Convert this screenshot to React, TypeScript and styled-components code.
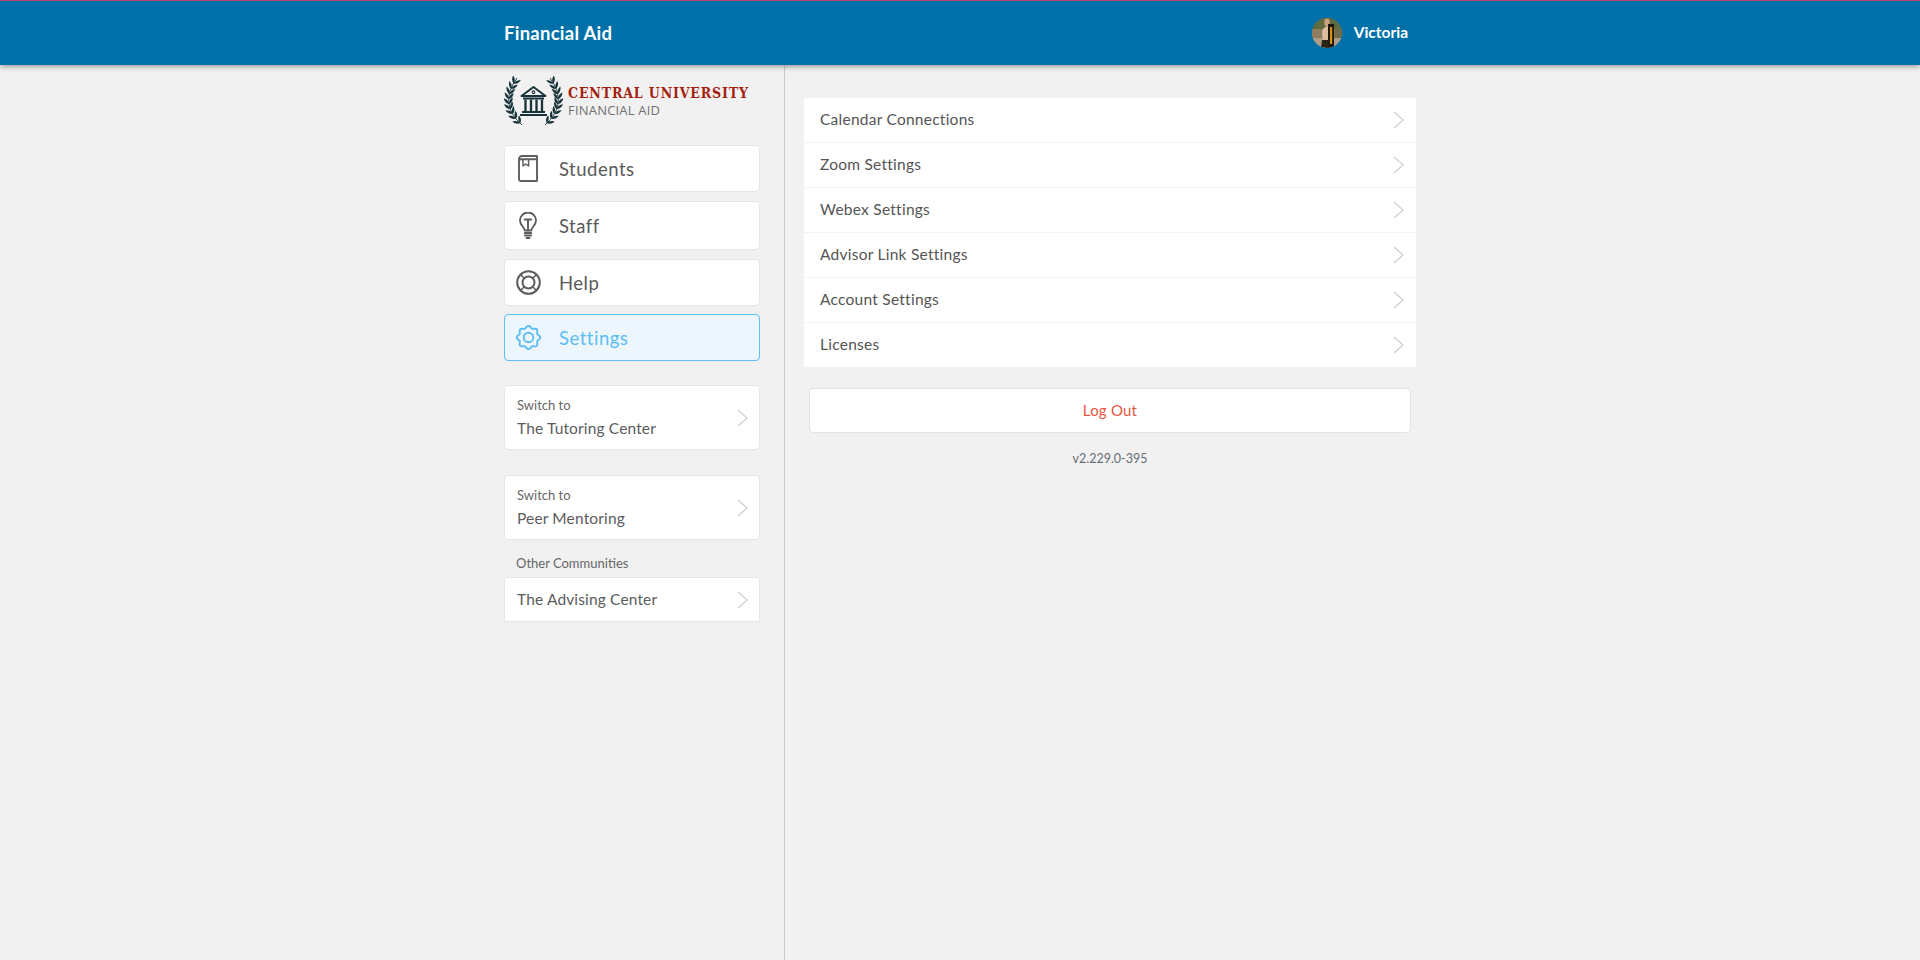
import React from "react";
import styled, { createGlobalStyle } from "styled-components";

const Global = createGlobalStyle`
  html, body { margin: 0; padding: 0; background: #f1f1f1; }
  body { font-family: Lato, "Open Sans", "Liberation Sans", sans-serif; color: #555; }
  * { box-sizing: border-box; }
`;

const Page = styled.div`
  height: 960px;
  display: flex;
  flex-direction: column;
  overflow: hidden;
`;
const TopBar = styled.header`
  height: 65px;
  flex: none;
  background: #0071a8;
  border-top: 1px solid #c2406f;
  box-shadow: 0 1px 6px rgba(0, 0, 0, 0.45);
  position: relative;
  z-index: 2;
`;
const TopInner = styled.div`
  width: 912px;
  height: 100%;
  margin: 0 auto;
  padding-right: 8px;
  display: flex;
  align-items: center;
  justify-content: space-between;
  color: #fff;
`;
const Title = styled.div`
  font-size: 18.5px;
  font-weight: 700;
  letter-spacing: 0.25px;
  padding-bottom: 1px;
`;
const User = styled.div`
  display: flex;
  align-items: center;
  gap: 12px;
  font-size: 15.5px;
  font-weight: 700;
`;
const UserName = styled.span`
  display: block;
  padding-bottom: 2px;
`;
const Columns = styled.div`
  flex: 1;
  width: 912px;
  margin: 0 auto;
  display: flex;
  min-height: 0;
`;
const Sidebar = styled.aside`
  width: 281px;
  flex: none;
  padding-right: 24px;
  border-right: 1px solid #c8c8c8;
  display: flex;
  flex-direction: column;
`;
const Logo = styled.div`
  height: 50px;
  margin-top: 11px;
  display: flex;
  align-items: center;
  gap: 5px;
`;
const LogoText = styled.div`
  display: flex;
  flex-direction: column;
`;
const LogoTop = styled.div`
  font-family: "DejaVu Serif", serif;
  font-stretch: condensed;
  font-weight: 700;
  font-size: 14px;
  line-height: 18px;
  letter-spacing: 0.85px;
  color: #a51f10;
  white-space: nowrap;
`;
const LogoSub = styled.div`
  font-family: "Open Sans", sans-serif;
  font-size: 13px;
  line-height: 16px;
  letter-spacing: 0.2px;
  color: #707070;
  white-space: nowrap;
`;
const NavList = styled.nav`
  margin-top: 19px;
  display: flex;
  flex-direction: column;
`;
const NavItem = styled.div<{ $active?: boolean; $h: number; $mb: number }>`
  height: ${(p) => p.$h}px;
  margin-bottom: ${(p) => p.$mb}px;
  display: flex;
  align-items: center;
  background: ${(p) => (p.$active ? "#edf6fd" : "#fff")};
  border: 1px solid ${(p) => (p.$active ? "#5cc0f9" : "#e6e6e6")};
  border-radius: 4px;
  color: ${(p) => (p.$active ? "#5bbdf6" : "#5a5a5a")};
  font-size: 18.5px;
  font-weight: 400;
  letter-spacing: 0.5px;
`;
const NavIcon = styled.span`
  width: 54px;
  flex: none;
  padding-right: 8px;
  display: flex;
  align-items: center;
  justify-content: center;
`;
const SwitchCard = styled.div<{ $h: number; $mb: number; $square?: boolean }>`
  height: ${(p) => p.$h}px;
  margin-bottom: ${(p) => p.$mb}px;
  padding: 0 11px 0 12px;
  display: flex;
  align-items: center;
  justify-content: space-between;
  background: #fff;
  border: 1px solid #e6e6e6;
  border-radius: ${(p) => (p.$square ? 1 : 4)}px;
`;
const SwitchText = styled.div`
  display: flex;
  flex-direction: column;
  padding-bottom: 1px;
`;
const SwitchSmall = styled.div`
  font-size: 13px;
  line-height: 17px;
  color: #666;
  margin-bottom: 4px;
`;
const SwitchName = styled.div<{ $lift?: boolean }>`
  font-size: 15.5px;
  line-height: 20px;
  color: #5c5c5c;
  letter-spacing: 0.15px;
  padding-bottom: ${(p) => (p.$lift ? 2 : 0)}px;
`;
const OtherLabel = styled.div`
  font-size: 13px;
  line-height: 17px;
  color: #666;
  padding-left: 12px;
  margin-bottom: 5px;
`;
const Main = styled.main`
  flex: 1;
  padding-top: 33px;
  padding-left: 19px;
  display: flex;
  flex-direction: column;
  align-items: stretch;
`;
const SettingsList = styled.div`
  background: #fff;
  display: flex;
  flex-direction: column;
`;
const SettingsRow = styled.div`
  height: 45px;
  padding: 0 12px 0 16px;
  display: flex;
  align-items: center;
  justify-content: space-between;
  font-size: 15.5px;
  letter-spacing: 0.25px;
  color: #555;
  border-bottom: 1px solid #f3f3f3;
  &:last-child { border-bottom: none; height: 44px; }
`;
const RowLabel = styled.span`
  display: block;
  padding-bottom: 2px;
`;
const LogOut = styled.div`
  margin: 21px 5px 0;
  height: 45px;
  padding-bottom: 2px;
  display: flex;
  align-items: center;
  justify-content: center;
  background: #fff;
  border: 1px solid #e4e4e4;
  border-radius: 4px;
  font-size: 15px;
  letter-spacing: 0.2px;
  color: #e4573f;
`;
const Version = styled.div`
  margin-top: 17px;
  text-align: center;
  font-size: 12.5px;
  line-height: 18px;
  color: #666e75;
`;

const Chevron = () => (
  <svg width="11" height="18" viewBox="0 0 11 18" fill="none">
    <path d="M1 1l9 8-9 8" stroke="#cfcfcf" strokeWidth="1.3" />
  </svg>
);

const BookIcon = () => (
  <svg width="20" height="27" viewBox="0 0 20 27" fill="none" stroke="#606060" strokeWidth="1.9" strokeLinejoin="round">
    <path d="M19 1H4A3 3 0 0 0 1 4v20.500A1.500 1.500 0 0 0 2.500 26H19z" />
    <path d="M1 5.500A1.800 1.800 0 0 1 2.800 4.300H19" />
    <path d="M5 4.500v6.500l2.800-2 2.800 2V4.500" strokeWidth="1.500" />
  </svg>
);
const BulbIcon = () => (
  <svg width="18" height="28" viewBox="0 0 18 28" fill="none" stroke="#5c5c5c" strokeWidth="1.9" strokeLinecap="round" strokeLinejoin="round">
    <path d="M5.700 18.500c0-3.300-4.700-5.200-4.700-10a8 8 0 0 1 16 0c0 4.800-4.700 6.700-4.700 10z" />
    <path d="M5.700 7.500h6.600M9 7.500v11" />
    <path d="M5.800 21h6.400M6 23.500h6M7.500 26h3" strokeWidth="2" />
  </svg>
);
const BuoyIcon = () => (
  <svg width="25" height="25" viewBox="0 0 25 25" fill="none" stroke="#5c5c5c" strokeWidth="2">
    <circle cx="12.500" cy="12.500" r="11.300" />
    <circle cx="12.500" cy="12.500" r="6" />
    <path d="M4.500 4.500l3.800 3.800M20.500 4.500l-3.800 3.800M4.500 20.500l3.800-3.800M20.500 20.500l-3.800-3.800" strokeWidth="1.500" />
  </svg>
);

// Eight-lobed outline, sampled in polar form around the centre of a 25px box.
const gearPath = Array.from({ length: 96 }, (_, i) => {
  const a = (i / 96) * Math.PI * 2;
  const r = 10.6 + 1.1 * Math.cos(8 * a);
  const x = (12.5 + r * Math.sin(a)).toFixed(2);
  const y = (12.5 - r * Math.cos(a)).toFixed(2);
  return `${i === 0 ? "M" : "L"}${x} ${y}`;
}).join("") + "z";

const GearIcon = () => (
  <svg width="25" height="25" viewBox="0 0 25 25" fill="none" stroke="#5bbdf6" strokeWidth="1.900" strokeLinejoin="round">
    <path d={gearPath} />
    <circle cx="12.500" cy="12.500" r="4.800" />
  </svg>
);

const Avatar = () => (
  <svg width="30" height="30" viewBox="0 0 30 30">
    <defs>
      <clipPath id="av"><circle cx="15" cy="15" r="15" /></clipPath>
    </defs>
    <g clipPath="url(#av)">
      <rect width="30" height="30" fill="#8a7350" />
      <rect width="30" height="11" fill="#5d6b3e" />
      <rect y="20" width="30" height="10" fill="#ab9c8b" />
      <rect x="0" y="11" width="11" height="9" fill="#8f7d60" />
      <rect x="23" y="10" width="7" height="10" fill="#6f6a4a" />
      <ellipse cx="15" cy="4.500" rx="2.800" ry="4" fill="#caa07c" />
      <path d="M10 13c1-4 6-6 8-4l1 21H11z" fill="#dcbc9c" />
      <rect x="16" y="6" width="6" height="24" fill="#1a1610" />
      <rect x="18" y="9" width="2.200" height="17" fill="#d9920f" />
      <path d="M10 22h7v8H9z" fill="#2a2418" />
    </g>
  </svg>
);

// Laurel: leaves set in pairs along a quadratic stem from the base to the tip.
const stem = { p0: [18, 49], p1: [-6, 28], p2: [13, 2] };
const laurel = Array.from({ length: 9 }, (_, i) => {
  const t = 0.04 + (i / 9) * 0.96;
  const u = 1 - t;
  const x = u * u * stem.p0[0] + 2 * u * t * stem.p1[0] + t * t * stem.p2[0];
  const y = u * u * stem.p0[1] + 2 * u * t * stem.p1[1] + t * t * stem.p2[1];
  const dx = 2 * u * (stem.p1[0] - stem.p0[0]) + 2 * t * (stem.p2[0] - stem.p1[0]);
  const dy = 2 * u * (stem.p1[1] - stem.p0[1]) + 2 * t * (stem.p2[1] - stem.p1[1]);
  return { x, y, r: (Math.atan2(dy, dx) * 180) / Math.PI + 90 };
});

const Branch = () => (
  <>
    <path d="M18 49Q-6 28 13 2" stroke="#173339" strokeWidth="0.900" fill="none" />
    {laurel.map((l, i) => (
      <g key={i} transform={`translate(${l.x.toFixed(2)} ${l.y.toFixed(2)}) rotate(${l.r.toFixed(1)})`}>
        <path d="M0 0C2.200-1.800 2.400-5 1-8-1-5.500-1.200-2.500 0 0z" fill="#173339" transform="rotate(-38)" />
        <path d="M0 0C2.200-1.800 2.400-5 1-8-1-5.500-1.200-2.500 0 0z" fill="#173339" transform="rotate(30)" />
      </g>
    ))}
  </>
);

const LogoMark = () => (
  <svg width="59" height="50" viewBox="0 0 59 50" fill="none">
    <Branch />
    <g transform="matrix(-1 0 0 1 59 0)">
      <Branch />
    </g>
    <path d="M17.500 20L29.500 11 41.500 20z" stroke="#173339" strokeWidth="2" strokeLinejoin="round" />
    <circle cx="29.500" cy="16.200" r="1.300" stroke="#173339" strokeWidth="1.100" />
    <path d="M19 21.500h21v2H19zM18 35h23v2H18zM16 38h27v2H16z" fill="#173339" />
    <path d="M21.500 23.500V35M27 23.500V35M32.500 23.500V35M38 23.500V35" stroke="#173339" strokeWidth="2.300" />
  </svg>
);

const settings = ["Calendar Connections", "Zoom Settings", "Webex Settings", "Advisor Link Settings", "Account Settings", "Licenses"];

export default function App() {
  return (
    <Page>
      <Global />
      <TopBar>
        <TopInner>
          <Title>Financial Aid</Title>
          <User>
            <Avatar />
            <UserName>Victoria</UserName>
          </User>
        </TopInner>
      </TopBar>
      <Columns>
        <Sidebar>
          <Logo>
            <LogoMark />
            <LogoText>
              <LogoTop>CENTRAL UNIVERSITY</LogoTop>
              <LogoSub>FINANCIAL AID</LogoSub>
            </LogoText>
          </Logo>
          <NavList>
            <NavItem $h={47} $mb={9}>
              <NavIcon><BookIcon /></NavIcon>Students
            </NavItem>
            <NavItem $h={49} $mb={9}>
              <NavIcon><BulbIcon /></NavIcon>Staff
            </NavItem>
            <NavItem $h={47} $mb={8}>
              <NavIcon><BuoyIcon /></NavIcon>Help
            </NavItem>
            <NavItem $active $h={47} $mb={24}>
              <NavIcon><GearIcon /></NavIcon>Settings
            </NavItem>
          </NavList>
          <SwitchCard $h={65} $mb={25}>
            <SwitchText>
              <SwitchSmall>Switch to</SwitchSmall>
              <SwitchName>The Tutoring Center</SwitchName>
            </SwitchText>
            <Chevron />
          </SwitchCard>
          <SwitchCard $h={65} $mb={15}>
            <SwitchText>
              <SwitchSmall>Switch to</SwitchSmall>
              <SwitchName>Peer Mentoring</SwitchName>
            </SwitchText>
            <Chevron />
          </SwitchCard>
          <OtherLabel>Other Communities</OtherLabel>
          <SwitchCard $h={45} $mb={0} $square>
            <SwitchName $lift>The Advising Center</SwitchName>
            <Chevron />
          </SwitchCard>
        </Sidebar>
        <Main>
          <SettingsList>
            {settings.map((s) => (
              <SettingsRow key={s}>
                <RowLabel>{s}</RowLabel>
                <Chevron />
              </SettingsRow>
            ))}
          </SettingsList>
          <LogOut>Log Out</LogOut>
          <Version>v2.229.0-395</Version>
        </Main>
      </Columns>
    </Page>
  );
}
